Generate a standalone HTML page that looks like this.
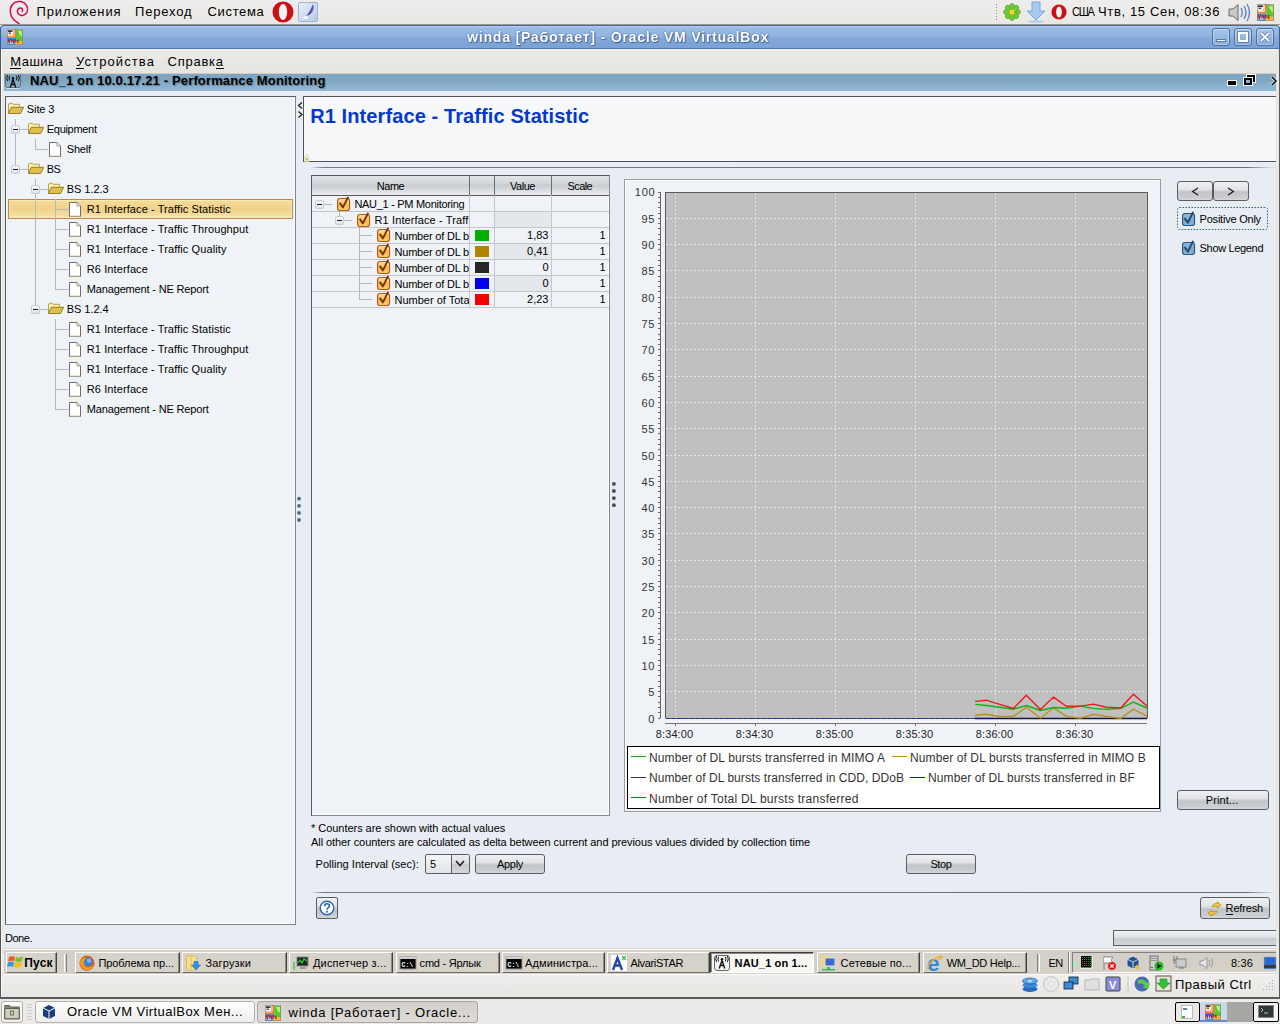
<!DOCTYPE html>
<html><head><meta charset="utf-8">
<style>
*{margin:0;padding:0;box-sizing:border-box}
html,body{width:1280px;height:1024px;overflow:hidden;background:#edebe9;font-family:"Liberation Sans",sans-serif;position:relative}
.a{position:absolute}
.t{position:absolute;white-space:nowrap;line-height:1}
svg{position:absolute;overflow:visible}
.btn{position:absolute;border:1px solid #5a5d62;border-radius:3px;background:linear-gradient(#eff0f2 0%,#e1e3e6 42%,#d2d5d8 48%,#c1c4c8 56%,#c9ccd0 85%,#d5d7da 100%)}
.wbtn{position:absolute;background:#d6d2ca;border-top:1px solid #fff;border-left:1px solid #fff;border-right:1px solid #404040;border-bottom:1px solid #6e6c68;box-shadow:inset -1px 0 0 #8c8a86}
.gbtn{position:absolute;border:1px solid #b3b0ab;border-radius:3px;background:linear-gradient(#fdfdfc,#efeeec)}
.hs{position:absolute;height:1px;background:#b4b9bf}
.vs{position:absolute;width:1px;background:#b4b9bf}
.exp{position:absolute;width:9px;height:9px;border:1px solid #c5ccd6;border-radius:2px;background:linear-gradient(#fafbfc,#dde2e8)}
.exp:after{content:"";position:absolute;left:1px;top:3px;width:5px;height:1px;background:#1a1a1a}
</style></head><body>
<div class="a" style="left:0;top:0;width:1280px;height:24px;background:linear-gradient(#efedeb,#eae8e5)"></div>
<svg style="left:0;top:0" width="32" height="25" viewBox="0 0 32 25"><path d="M19 23.5 C12.5 20.5 9.3 14.5 10.5 8.5 C11.8 3 16.5 0.8 21 1.6 C26 2.6 28.6 7.5 27.2 11.8 C26 15.2 21.5 16.6 18.8 14.3 C16.6 12.4 17 8.6 20 8.1 C22.2 7.8 23.2 9.8 22.2 11.3" fill="none" stroke="#d7094f" stroke-width="1.5" stroke-linecap="round"/></svg>
<span class="t" style="left:36.50px;top:5.00px;font-size:13px;letter-spacing:0.894px;">Приложения</span>
<span class="t" style="left:135.00px;top:5.00px;font-size:13px;letter-spacing:0.837px;">Переход</span>
<span class="t" style="left:207.50px;top:5.00px;font-size:13px;letter-spacing:0.663px;">Система</span>
<svg style="left:272px;top:1px" width="22" height="22" viewBox="0 0 22 22"><ellipse cx="11" cy="11" rx="10.5" ry="10.5" fill="#cc0f16"/><ellipse cx="11" cy="11" rx="4.2" ry="8" fill="#edebe9"/><ellipse cx="11" cy="11" rx="3.4" ry="7.2" fill="#f4f2f0"/></svg>
<div class="a" style="left:298px;top:2px;width:20px;height:20px;border:1px solid #9db3d6;border-radius:2px;background:linear-gradient(135deg,#e8eef8,#b9cbe8)"></div>
<svg style="left:300px;top:3px" width="16" height="18" viewBox="0 0 16 18"><path d="M13 1 C15 6 12 12 5 14 C9 10 11 6 13 1 Z" fill="#5a4bb0"/><path d="M2 15 L8 12 L7 16 Z" fill="#fff"/></svg>
<svg style="left:994px;top:3px" width="4" height="19" viewBox="0 0 4 19"><rect x="2" y="1" width="1" height="1" fill="#8a8884"/><rect x="2" y="4" width="1" height="1" fill="#8a8884"/><rect x="2" y="7" width="1" height="1" fill="#8a8884"/><rect x="2" y="10" width="1" height="1" fill="#8a8884"/><rect x="2" y="13" width="1" height="1" fill="#8a8884"/><rect x="2" y="16" width="1" height="1" fill="#8a8884"/></svg>
<svg style="left:1003px;top:3px" width="18" height="18" viewBox="0 0 18 18"><g><ellipse cx="13.60" cy="9.00" rx="2.6" ry="3.9" transform="rotate(90 13.60 9.00)" fill="#76cc3a" stroke="#4f9e22" stroke-width="0.7"/><ellipse cx="12.25" cy="12.25" rx="2.6" ry="3.9" transform="rotate(135 12.25 12.25)" fill="#76cc3a" stroke="#4f9e22" stroke-width="0.7"/><ellipse cx="9.00" cy="13.60" rx="2.6" ry="3.9" transform="rotate(180 9.00 13.60)" fill="#76cc3a" stroke="#4f9e22" stroke-width="0.7"/><ellipse cx="5.75" cy="12.25" rx="2.6" ry="3.9" transform="rotate(225 5.75 12.25)" fill="#76cc3a" stroke="#4f9e22" stroke-width="0.7"/><ellipse cx="4.40" cy="9.00" rx="2.6" ry="3.9" transform="rotate(270 4.40 9.00)" fill="#76cc3a" stroke="#4f9e22" stroke-width="0.7"/><ellipse cx="5.75" cy="5.75" rx="2.6" ry="3.9" transform="rotate(315 5.75 5.75)" fill="#76cc3a" stroke="#4f9e22" stroke-width="0.7"/><ellipse cx="9.00" cy="4.40" rx="2.6" ry="3.9" transform="rotate(360 9.00 4.40)" fill="#76cc3a" stroke="#4f9e22" stroke-width="0.7"/><ellipse cx="12.25" cy="5.75" rx="2.6" ry="3.9" transform="rotate(405 12.25 5.75)" fill="#76cc3a" stroke="#4f9e22" stroke-width="0.7"/></g><circle cx="9" cy="9" r="2.6" fill="#f2d52a"/></svg>
<svg style="left:1026px;top:1px" width="20" height="22" viewBox="0 0 20 22"><path d="M6 1 H14 V10 H19 L10 19 L1 10 H6 Z" fill="#a8c8ee" stroke="#7aa6dc" stroke-width="1"/><ellipse cx="10" cy="20.5" rx="8" ry="1.5" fill="#b8d0ee"/></svg>
<svg style="left:1051px;top:4px" width="16" height="16" viewBox="0 0 16 16"><circle cx="8" cy="8" r="7.6" fill="#cc0f16"/><ellipse cx="8" cy="8" rx="2.9" ry="5.6" fill="#f4f2f0"/></svg>
<span class="t" style="left:1072.00px;top:6.69px;font-size:11px;letter-spacing:-1.292px;transform:scaleY(1.08);">США</span>
<span class="t" style="left:1098.00px;top:5.00px;font-size:13px;letter-spacing:0.646px;">Чтв, 15 Сен, 08:36</span>
<svg style="left:1228px;top:3px" width="23" height="19" viewBox="0 0 23 19"><path d="M1 6 H5 L10 1.5 V17.5 L5 13 H1 Z" fill="#c8c8c8" stroke="#6a6a6a" stroke-width="1"/><path d="M13 5 Q15.5 9.5 13 14 M16 3 Q20 9.5 16 16 M19 1 Q24 9.5 19 18" fill="none" stroke="#5a82c8" stroke-width="1.3"/></svg>
<svg style="left:1257px;top:4px" width="17" height="17" viewBox="0 0 16 16"><rect x="0" y="0" width="16" height="16" fill="#e8e4dc"/><rect x="0" y="9" width="9" height="7" fill="#3a8ee8"/><rect x="1" y="11" width="5" height="4" fill="#9cd0fa"/><path d="M9 1 H16 V12 H9 Z" fill="#58c838"/><path d="M11 2 H15 V8 Q12 6 11 2 Z" fill="#b8f070"/><rect x="8" y="12" width="8" height="4" fill="#f4b83a"/><path d="M6.5 0 H9.5 L8.8 9 H0 V6.5 H6 Z" fill="#ee7a2a"/><path d="M7.2 1 L7 7 H1" stroke="#fff3e0" stroke-width="0.8" fill="none"/><rect x="0.5" y="0.5" width="5.5" height="5" fill="#fff"/><rect x="1" y="1.3" width="4.5" height="1.6" fill="#222"/><rect x="1.5" y="3.5" width="2.5" height="1.3" fill="#444"/><path d="M1 10 L2.2 13.5 L3.4 10 M4.6 10.5 V13.5 M6.3 10.5 Q5.2 11.2 6.3 12 Q7.2 12.7 6 13.5 M8.2 10 V13.5 M7.4 11 H9 M11.8 11 Q9.8 11 10.2 12.5 Q10.6 13.8 12 13" stroke="#a8182a" stroke-width="1.1" fill="none"/><rect x="0.3" y="0.3" width="15.4" height="15.4" fill="none" stroke="#8a8070" stroke-width="0.6"/></svg>
<div class="a" style="left:0;top:24px;width:1280px;height:1px;background:#9c9890"></div>
<div class="a" style="left:0;top:25px;width:1280px;height:24px;background:linear-gradient(#b6d0f3 0,#9abbe6 2px,#92b4e1 45%,#84a8d8 55%,#7ba2d6 100%);border-top:1px solid #4a6690;border-bottom:1px solid #4f76ad;border-left:1px solid #3e5a86;border-right:1px solid #3e5a86;border-radius:4px 4px 0 0"></div>
<svg style="left:7px;top:29px" width="16" height="16" viewBox="0 0 16 16"><rect x="0" y="0" width="16" height="16" fill="#e8e4dc"/><rect x="0" y="9" width="9" height="7" fill="#3a8ee8"/><rect x="1" y="11" width="5" height="4" fill="#9cd0fa"/><path d="M9 1 H16 V12 H9 Z" fill="#58c838"/><path d="M11 2 H15 V8 Q12 6 11 2 Z" fill="#b8f070"/><rect x="8" y="12" width="8" height="4" fill="#f4b83a"/><path d="M6.5 0 H9.5 L8.8 9 H0 V6.5 H6 Z" fill="#ee7a2a"/><path d="M7.2 1 L7 7 H1" stroke="#fff3e0" stroke-width="0.8" fill="none"/><rect x="0.5" y="0.5" width="5.5" height="5" fill="#fff"/><rect x="1" y="1.3" width="4.5" height="1.6" fill="#222"/><rect x="1.5" y="3.5" width="2.5" height="1.3" fill="#444"/><path d="M1 10 L2.2 13.5 L3.4 10 M4.6 10.5 V13.5 M6.3 10.5 Q5.2 11.2 6.3 12 Q7.2 12.7 6 13.5 M8.2 10 V13.5 M7.4 11 H9 M11.8 11 Q9.8 11 10.2 12.5 Q10.6 13.8 12 13" stroke="#a8182a" stroke-width="1.1" fill="none"/><rect x="0.3" y="0.3" width="15.4" height="15.4" fill="none" stroke="#8a8070" stroke-width="0.6"/></svg>
<span class="t" style="left:467.00px;top:30.45px;font-size:14px;font-weight:700;color:#fff;letter-spacing:0.812px;text-shadow:0 0 1px #2f5590,0 0 1px #2f5590,1px 1px 1px #41679d;">winda [Работает] - Oracle VM VirtualBox</span>
<div class="a" style="left:1212px;top:28px;width:18px;height:18px;border:1px solid #4d6e9e;border-radius:3px;background:linear-gradient(#a9c5ea,#86abdc);box-shadow:inset 0 0 0 1px rgba(255,255,255,.35)"></div>
<div class="a" style="left:1234px;top:28px;width:18px;height:18px;border:1px solid #4d6e9e;border-radius:3px;background:linear-gradient(#a9c5ea,#86abdc);box-shadow:inset 0 0 0 1px rgba(255,255,255,.35)"></div>
<div class="a" style="left:1256px;top:28px;width:18px;height:18px;border:1px solid #4d6e9e;border-radius:3px;background:linear-gradient(#a9c5ea,#86abdc);box-shadow:inset 0 0 0 1px rgba(255,255,255,.35)"></div>
<div class="a" style="left:1216px;top:39px;width:10px;height:3px;background:#fff;border:1px solid #5a7aa8;box-sizing:content-box;width:8px;height:1px"></div>
<div class="a" style="left:1238px;top:32px;width:10px;height:10px;border:2px solid #fff;outline:1px solid rgba(70,100,150,.6)"></div>
<svg style="left:1260px;top:32px" width="10" height="10" viewBox="0 0 10 10"><path d="M1 1 L9 9 M9 1 L1 9" stroke="#5a7aa8" stroke-width="3.2"/><path d="M1 1 L9 9 M9 1 L1 9" stroke="#fff" stroke-width="1.8"/></svg>
<div class="a" style="left:0;top:49px;width:1280px;height:24px;background:linear-gradient(#f4f3f1 0,#ebe9e6 2px,#e7e5e2 100%)"></div>
<span class="t" style="left:10.30px;top:55.00px;font-size:13px;letter-spacing:0.448px;">Машина</span>
<div class="a" style="left:10px;top:68px;width:11px;height:1px;background:#000"></div>
<span class="t" style="left:76.00px;top:55.00px;font-size:13px;letter-spacing:1.098px;">Устройства</span>
<div class="a" style="left:76px;top:68px;width:8px;height:1px;background:#000"></div>
<span class="t" style="left:167.50px;top:55.00px;font-size:13px;letter-spacing:0.757px;">Справка</span>
<div class="a" style="left:216px;top:68px;width:8px;height:1px;background:#000"></div>
<div class="a" style="left:0;top:49px;width:4px;height:950px;background:linear-gradient(90deg,#555 0 1px,#fafafa 1px 2px,#e9e7e4 2px)"></div>
<div class="a" style="left:1276px;top:49px;width:4px;height:950px;background:linear-gradient(90deg,#e9e7e4 0 3px,#5a5a5a 3px)"></div>
<div class="a" style="left:0;top:997px;width:1280px;height:2px;background:#5a5a5a"></div>
<div class="a" style="left:4px;top:73px;width:1272px;height:876px;background:#e8ecf3"></div>
<div class="a" style="left:4px;top:73px;width:1272px;height:1px;background:#d2ccc4"></div><div class="a" style="left:4px;top:74px;width:1272px;height:17px;background:linear-gradient(#7fa5c2 0%,#7fa6c1 35%,#8cb2cf 75%,#93b9d5 100%)"></div>
<div class="a" style="left:5px;top:74px;width:16px;height:14px;border:1px solid #6f6f6f;border-top:none;border-radius:0 0 3px 3px;box-shadow:0 1px 0 #d8dde2"></div>
<svg style="left:5px;top:73.5px" width="16" height="16" viewBox="0 0 16 16"><path d="M8 5.5 L5.2 13.5 M8 5.5 L10.8 13.5 M6.3 10.5 H9.7" stroke="#111" stroke-width="1.4" fill="none"/><circle cx="8" cy="4.2" r="1.3" fill="#111"/><path d="M4.6 1.8 Q3.4 4 4.6 6.4 M11.4 1.8 Q12.6 4 11.4 6.4 M2.6 1 Q0.9 4 2.6 7.2 M13.4 1 Q15.1 4 13.4 7.2" stroke="#111" stroke-width="1" fill="none"/></svg>
<span class="t" style="left:30.00px;top:74.00px;font-size:13px;font-weight:700;letter-spacing:0.148px;text-shadow:1px 1px 1px rgba(60,80,100,.55);">NAU_1 on 10.0.17.21 - Performance Monitoring</span>
<div class="a" style="left:1228px;top:81px;width:8px;height:4px;background:#000;box-shadow:0 0 0 1px #fff"></div>
<div class="a" style="left:1247px;top:75px;width:8px;height:7px;border:2px solid #000;box-shadow:0 0 0 1px #fff"></div><div class="a" style="left:1244px;top:78px;width:8px;height:7px;border:2px solid #000;background:#8fb4d1;box-shadow:0 0 0 1px #fff"></div>
<svg style="left:1271px;top:76px" width="6" height="10" viewBox="0 0 6 10"><path d="M1 1 L5 5 L1 9" stroke="#fff" stroke-width="3" fill="none"/><path d="M1 1 L5 5 L1 9" stroke="#000" stroke-width="1.6" fill="none"/></svg>
<div class="a" style="left:5px;top:96px;width:291px;height:829px;background:#eff3f8;border:1px solid #575c60;border-right-color:#80868b;border-bottom-color:#7c8287;box-shadow:inset -1px -1px 0 #fbfdff"></div>
<div class="a" style="left:8px;top:199px;width:285px;height:20px;border:1px solid #c3834c;background:linear-gradient(#f5dc98,#f0d189 50%,#f6e4ad);box-shadow:inset 0 0 0 1px rgba(255,248,210,.45)"></div>
<div class="vs" style="left:15px;top:119px;height:50px"></div>
<div class="vs" style="left:35px;top:139px;height:10px"></div>
<div class="hs" style="left:35px;top:149px;width:13px"></div>
<div class="vs" style="left:35px;top:179px;height:130px"></div>
<div class="vs" style="left:55px;top:199px;height:90px"></div>
<div class="vs" style="left:55px;top:319px;height:90px"></div>
<svg style="left:8px;top:103px" width="16" height="11" viewBox="0 0 16 11"><path d="M0.5 10.5 V1 L1.2 0.4 H4.5 L5.3 1.3 H11.5 V3.8" fill="#fcedb0" stroke="#b09838" stroke-width="0.9"/><path d="M0.5 10.5 L3.3 4.3 H15.6 L12.6 10.5 Z" fill="#e2bf4e" stroke="#8c7424" stroke-width="0.9"/></svg>
<span class="t" style="left:26.80px;top:103.69px;font-size:11px;letter-spacing:-0.100px;">Site 3</span>
<div class="hs" style="left:15px;top:129px;width:13px"></div>
<div class="exp" style="left:11px;top:125px"></div>
<svg style="left:28px;top:123px" width="16" height="11" viewBox="0 0 16 11"><path d="M0.5 10.5 V1 L1.2 0.4 H4.5 L5.3 1.3 H11.5 V3.8" fill="#fcedb0" stroke="#b09838" stroke-width="0.9"/><path d="M0.5 10.5 L3.3 4.3 H15.6 L12.6 10.5 Z" fill="#e2bf4e" stroke="#8c7424" stroke-width="0.9"/></svg>
<span class="t" style="left:46.80px;top:123.69px;font-size:11px;letter-spacing:-0.300px;">Equipment</span>
<svg style="left:49px;top:142px" width="12" height="15" viewBox="0 0 12 15"><path d="M0.5 0.5 H8 L11.5 4 V14.5 H0.5 Z" fill="#fff" stroke="#6f6f6f" stroke-width="1"/><path d="M8 0.5 V4 H11.5" fill="#f4eecf" stroke="#8a8a8a" stroke-width="0.8"/><path d="M1 14 H11" stroke="#d8d0a8" stroke-width="1"/></svg>
<span class="t" style="left:66.80px;top:143.69px;font-size:11px;letter-spacing:-0.220px;">Shelf</span>
<div class="hs" style="left:15px;top:169px;width:13px"></div>
<div class="exp" style="left:11px;top:165px"></div>
<svg style="left:28px;top:163px" width="16" height="11" viewBox="0 0 16 11"><path d="M0.5 10.5 V1 L1.2 0.4 H4.5 L5.3 1.3 H11.5 V3.8" fill="#fcedb0" stroke="#b09838" stroke-width="0.9"/><path d="M0.5 10.5 L3.3 4.3 H15.6 L12.6 10.5 Z" fill="#e2bf4e" stroke="#8c7424" stroke-width="0.9"/></svg>
<span class="t" style="left:46.80px;top:163.69px;font-size:11px;letter-spacing:-0.750px;">BS</span>
<div class="hs" style="left:35px;top:189px;width:13px"></div>
<div class="exp" style="left:31px;top:185px"></div>
<svg style="left:48px;top:183px" width="16" height="11" viewBox="0 0 16 11"><path d="M0.5 10.5 V1 L1.2 0.4 H4.5 L5.3 1.3 H11.5 V3.8" fill="#fcedb0" stroke="#b09838" stroke-width="0.9"/><path d="M0.5 10.5 L3.3 4.3 H15.6 L12.6 10.5 Z" fill="#e2bf4e" stroke="#8c7424" stroke-width="0.9"/></svg>
<span class="t" style="left:66.80px;top:183.69px;font-size:11px;letter-spacing:-0.062px;">BS 1.2.3</span>
<div class="hs" style="left:55px;top:209px;width:13px"></div>
<svg style="left:69px;top:202px" width="12" height="15" viewBox="0 0 12 15"><path d="M0.5 0.5 H8 L11.5 4 V14.5 H0.5 Z" fill="#fff" stroke="#6f6f6f" stroke-width="1"/><path d="M8 0.5 V4 H11.5" fill="#f4eecf" stroke="#8a8a8a" stroke-width="0.8"/><path d="M1 14 H11" stroke="#d8d0a8" stroke-width="1"/></svg>
<span class="t" style="left:86.80px;top:203.69px;font-size:11px;letter-spacing:0.094px;">R1 Interface - Traffic Statistic</span>
<div class="hs" style="left:55px;top:229px;width:13px"></div>
<svg style="left:69px;top:222px" width="12" height="15" viewBox="0 0 12 15"><path d="M0.5 0.5 H8 L11.5 4 V14.5 H0.5 Z" fill="#fff" stroke="#6f6f6f" stroke-width="1"/><path d="M8 0.5 V4 H11.5" fill="#f4eecf" stroke="#8a8a8a" stroke-width="0.8"/><path d="M1 14 H11" stroke="#d8d0a8" stroke-width="1"/></svg>
<span class="t" style="left:86.80px;top:223.69px;font-size:11px;letter-spacing:0.091px;">R1 Interface - Traffic Throughput</span>
<div class="hs" style="left:55px;top:249px;width:13px"></div>
<svg style="left:69px;top:242px" width="12" height="15" viewBox="0 0 12 15"><path d="M0.5 0.5 H8 L11.5 4 V14.5 H0.5 Z" fill="#fff" stroke="#6f6f6f" stroke-width="1"/><path d="M8 0.5 V4 H11.5" fill="#f4eecf" stroke="#8a8a8a" stroke-width="0.8"/><path d="M1 14 H11" stroke="#d8d0a8" stroke-width="1"/></svg>
<span class="t" style="left:86.80px;top:243.69px;font-size:11px;letter-spacing:0.100px;">R1 Interface - Traffic Quality</span>
<div class="hs" style="left:55px;top:269px;width:13px"></div>
<svg style="left:69px;top:262px" width="12" height="15" viewBox="0 0 12 15"><path d="M0.5 0.5 H8 L11.5 4 V14.5 H0.5 Z" fill="#fff" stroke="#6f6f6f" stroke-width="1"/><path d="M8 0.5 V4 H11.5" fill="#f4eecf" stroke="#8a8a8a" stroke-width="0.8"/><path d="M1 14 H11" stroke="#d8d0a8" stroke-width="1"/></svg>
<span class="t" style="left:86.80px;top:263.69px;font-size:11px;letter-spacing:0.100px;">R6 Interface</span>
<div class="hs" style="left:55px;top:289px;width:13px"></div>
<svg style="left:69px;top:282px" width="12" height="15" viewBox="0 0 12 15"><path d="M0.5 0.5 H8 L11.5 4 V14.5 H0.5 Z" fill="#fff" stroke="#6f6f6f" stroke-width="1"/><path d="M8 0.5 V4 H11.5" fill="#f4eecf" stroke="#8a8a8a" stroke-width="0.8"/><path d="M1 14 H11" stroke="#d8d0a8" stroke-width="1"/></svg>
<span class="t" style="left:86.80px;top:283.69px;font-size:11px;letter-spacing:-0.159px;">Management - NE Report</span>
<div class="hs" style="left:35px;top:309px;width:13px"></div>
<div class="exp" style="left:31px;top:305px"></div>
<svg style="left:48px;top:303px" width="16" height="11" viewBox="0 0 16 11"><path d="M0.5 10.5 V1 L1.2 0.4 H4.5 L5.3 1.3 H11.5 V3.8" fill="#fcedb0" stroke="#b09838" stroke-width="0.9"/><path d="M0.5 10.5 L3.3 4.3 H15.6 L12.6 10.5 Z" fill="#e2bf4e" stroke="#8c7424" stroke-width="0.9"/></svg>
<span class="t" style="left:66.80px;top:303.69px;font-size:11px;letter-spacing:-0.062px;">BS 1.2.4</span>
<div class="hs" style="left:55px;top:329px;width:13px"></div>
<svg style="left:69px;top:322px" width="12" height="15" viewBox="0 0 12 15"><path d="M0.5 0.5 H8 L11.5 4 V14.5 H0.5 Z" fill="#fff" stroke="#6f6f6f" stroke-width="1"/><path d="M8 0.5 V4 H11.5" fill="#f4eecf" stroke="#8a8a8a" stroke-width="0.8"/><path d="M1 14 H11" stroke="#d8d0a8" stroke-width="1"/></svg>
<span class="t" style="left:86.80px;top:323.69px;font-size:11px;letter-spacing:0.094px;">R1 Interface - Traffic Statistic</span>
<div class="hs" style="left:55px;top:349px;width:13px"></div>
<svg style="left:69px;top:342px" width="12" height="15" viewBox="0 0 12 15"><path d="M0.5 0.5 H8 L11.5 4 V14.5 H0.5 Z" fill="#fff" stroke="#6f6f6f" stroke-width="1"/><path d="M8 0.5 V4 H11.5" fill="#f4eecf" stroke="#8a8a8a" stroke-width="0.8"/><path d="M1 14 H11" stroke="#d8d0a8" stroke-width="1"/></svg>
<span class="t" style="left:86.80px;top:343.69px;font-size:11px;letter-spacing:0.091px;">R1 Interface - Traffic Throughput</span>
<div class="hs" style="left:55px;top:369px;width:13px"></div>
<svg style="left:69px;top:362px" width="12" height="15" viewBox="0 0 12 15"><path d="M0.5 0.5 H8 L11.5 4 V14.5 H0.5 Z" fill="#fff" stroke="#6f6f6f" stroke-width="1"/><path d="M8 0.5 V4 H11.5" fill="#f4eecf" stroke="#8a8a8a" stroke-width="0.8"/><path d="M1 14 H11" stroke="#d8d0a8" stroke-width="1"/></svg>
<span class="t" style="left:86.80px;top:363.69px;font-size:11px;letter-spacing:0.100px;">R1 Interface - Traffic Quality</span>
<div class="hs" style="left:55px;top:389px;width:13px"></div>
<svg style="left:69px;top:382px" width="12" height="15" viewBox="0 0 12 15"><path d="M0.5 0.5 H8 L11.5 4 V14.5 H0.5 Z" fill="#fff" stroke="#6f6f6f" stroke-width="1"/><path d="M8 0.5 V4 H11.5" fill="#f4eecf" stroke="#8a8a8a" stroke-width="0.8"/><path d="M1 14 H11" stroke="#d8d0a8" stroke-width="1"/></svg>
<span class="t" style="left:86.80px;top:383.69px;font-size:11px;letter-spacing:0.100px;">R6 Interface</span>
<div class="hs" style="left:55px;top:409px;width:13px"></div>
<svg style="left:69px;top:402px" width="12" height="15" viewBox="0 0 12 15"><path d="M0.5 0.5 H8 L11.5 4 V14.5 H0.5 Z" fill="#fff" stroke="#6f6f6f" stroke-width="1"/><path d="M8 0.5 V4 H11.5" fill="#f4eecf" stroke="#8a8a8a" stroke-width="0.8"/><path d="M1 14 H11" stroke="#d8d0a8" stroke-width="1"/></svg>
<span class="t" style="left:86.80px;top:403.69px;font-size:11px;letter-spacing:-0.159px;">Management - NE Report</span>
<svg style="left:297px;top:101px" width="6" height="18" viewBox="0 0 6 18"><path d="M5 1.5 L1.5 4.5 L5 7.5 M1.5 10.5 L5 13.5 L1.5 16.5" stroke="#222" stroke-width="1.3" fill="none"/></svg>
<svg style="left:296px;top:496px" width="6" height="27" viewBox="0 0 6 27"><circle cx="3" cy="2.7" r="1.9" fill="#4f6a85"/><circle cx="3" cy="9.8" r="1.9" fill="#4f6a85"/><circle cx="3" cy="16.9" r="1.9" fill="#4f6a85"/><circle cx="3" cy="23.999999999999996" r="1.9" fill="#4f6a85"/></svg>
<div class="a" style="left:303px;top:96px;width:973px;height:66px;background:#f7f8fa;border-top:1px solid #505458;border-bottom:1px solid #505458;border-left:1px solid #505458"></div>
<span class="t" style="left:310.20px;top:105.57px;font-size:20px;font-weight:700;color:#0539cc;letter-spacing:0.104px;">R1 Interface - Traffic Statistic</span>
<svg style="left:304px;top:154px" width="6" height="8" viewBox="0 0 6 8"><path d="M1.5 3 V2 A1.5 1.3 0 0 1 4.5 2 V3" stroke="#d8d8d0" fill="none" stroke-width="0.9"/><rect x="0.5" y="3" width="4.5" height="4.5" fill="#f2eeb0" stroke="#e0dca0" stroke-width="0.5"/><rect x="2" y="4.5" width="1.6" height="1.6" fill="#9a9aa8"/></svg>
<div class="a" style="left:311px;top:167px;width:965px;height:1px;background:linear-gradient(90deg,#e8ecf3 0,#767a7e 12px,#6a6e72 935px,#e8ecf3 100%)"></div>
<div class="a" style="left:311px;top:175px;width:299px;height:641px;background:#eff3f8;border:1px solid #55595d;border-right-color:#868a8e;border-bottom-color:#84888c;box-shadow:inset -1px -1px 0 #fbfdff"></div>
<div class="a" style="left:312px;top:176px;width:297px;height:20px;background:linear-gradient(#e1e4e8 0%,#d6d9dd 30%,#c9ccd1 50%,#d9dce0 75%,#eceef0 100%);border-bottom:1px solid #56595d"></div>
<div class="a" style="left:469px;top:176px;width:1px;height:20px;background:#6a6d71"></div>
<div class="a" style="left:469px;top:195px;width:1px;height:112px;background:#c3c7cc"></div>
<div class="a" style="left:494px;top:176px;width:1px;height:20px;background:#6a6d71"></div>
<div class="a" style="left:494px;top:195px;width:1px;height:112px;background:#c3c7cc"></div>
<div class="a" style="left:551px;top:176px;width:1px;height:20px;background:#6a6d71"></div>
<div class="a" style="left:551px;top:195px;width:1px;height:112px;background:#c3c7cc"></div>
<span class="t" style="left:376.75px;top:180.69px;font-size:11px;letter-spacing:-0.461px;">Name</span>
<span class="t" style="left:510.00px;top:180.69px;font-size:11px;letter-spacing:-0.466px;">Value</span>
<span class="t" style="left:567.55px;top:180.69px;font-size:11px;letter-spacing:-0.606px;">Scale</span>
<div class="a" style="left:312px;top:211px;width:297px;height:1px;background:#c3c7cc"></div>
<div class="a" style="left:312px;top:227px;width:297px;height:1px;background:#c3c7cc"></div>
<div class="a" style="left:312px;top:243px;width:297px;height:1px;background:#c3c7cc"></div>
<div class="a" style="left:312px;top:259px;width:297px;height:1px;background:#c3c7cc"></div>
<div class="a" style="left:312px;top:275px;width:297px;height:1px;background:#c3c7cc"></div>
<div class="a" style="left:312px;top:291px;width:297px;height:1px;background:#c3c7cc"></div>
<div class="a" style="left:312px;top:307px;width:297px;height:1px;background:#c3c7cc"></div>
<div class="a" style="left:495px;top:212px;width:56px;height:15px;background:#e4e7eb"></div>
<div class="a" style="left:495px;top:244px;width:56px;height:15px;background:#e4e7eb"></div>
<div class="a" style="left:495px;top:276px;width:56px;height:15px;background:#e4e7eb"></div>
<div class="exp" style="left:315px;top:200px"></div>
<div class="hs" style="left:324px;top:204px;width:8px"></div>
<svg style="left:337px;top:196px" width="15" height="16" viewBox="0 0 15 16"><defs><linearGradient id="cg" x1="0" y1="0" x2="0" y2="1"><stop offset="0" stop-color="#fde69e"/><stop offset="0.55" stop-color="#f2bb52"/><stop offset="1" stop-color="#f6d274"/></linearGradient></defs><rect x="0.55" y="2.55" width="12" height="12" rx="2.6" fill="url(#cg)" stroke="#b3560f" stroke-width="1.1"/><path d="M2.6 6.8 L5.9 11.4 L11.2 0.8" stroke="#7a2e0e" stroke-width="1.9" fill="none" stroke-linejoin="round"/></svg>
<span class="t" style="left:354.40px;top:198.89px;font-size:11px;letter-spacing:-0.293px;">NAU_1 - PM Monitoring</span>
<div class="vs" style="left:339px;top:211px;height:5px"></div>
<div class="exp" style="left:335px;top:216px"></div>
<div class="hs" style="left:344px;top:220px;width:8px"></div>
<svg style="left:357px;top:212px" width="15" height="16" viewBox="0 0 15 16"><defs><linearGradient id="cg" x1="0" y1="0" x2="0" y2="1"><stop offset="0" stop-color="#fde69e"/><stop offset="0.55" stop-color="#f2bb52"/><stop offset="1" stop-color="#f6d274"/></linearGradient></defs><rect x="0.55" y="2.55" width="12" height="12" rx="2.6" fill="url(#cg)" stroke="#b3560f" stroke-width="1.1"/><path d="M2.6 6.8 L5.9 11.4 L11.2 0.8" stroke="#7a2e0e" stroke-width="1.9" fill="none" stroke-linejoin="round"/></svg>
<div class="a" style="left:312px;top:196px;width:157px;height:111px;overflow:hidden">
<span class="t" style="left:62.50px;top:18.89px;font-size:11px;letter-spacing:0.12px;">R1 Interface - Traffic Statistic</span>
<span class="t" style="left:82.50px;top:34.89px;font-size:11px;letter-spacing:-0.2px;">Number of DL bursts transferred</span>
<span class="t" style="left:82.50px;top:50.89px;font-size:11px;letter-spacing:-0.2px;">Number of DL bursts transferred</span>
<span class="t" style="left:82.50px;top:66.89px;font-size:11px;letter-spacing:-0.2px;">Number of DL bursts transferred</span>
<span class="t" style="left:82.50px;top:82.89px;font-size:11px;letter-spacing:-0.2px;">Number of DL bursts transferred</span>
<span class="t" style="left:82.50px;top:98.89px;font-size:11px;letter-spacing:0px;">Number of Total DL bursts transferred</span>
</div>
<div class="vs" style="left:359px;top:227px;height:73px"></div>
<div class="hs" style="left:360px;top:235px;width:12px"></div>
<svg style="left:377px;top:227px" width="15" height="16" viewBox="0 0 15 16"><defs><linearGradient id="cg" x1="0" y1="0" x2="0" y2="1"><stop offset="0" stop-color="#fde69e"/><stop offset="0.55" stop-color="#f2bb52"/><stop offset="1" stop-color="#f6d274"/></linearGradient></defs><rect x="0.55" y="2.55" width="12" height="12" rx="2.6" fill="url(#cg)" stroke="#b3560f" stroke-width="1.1"/><path d="M2.6 6.8 L5.9 11.4 L11.2 0.8" stroke="#7a2e0e" stroke-width="1.9" fill="none" stroke-linejoin="round"/></svg>
<div class="hs" style="left:360px;top:251px;width:12px"></div>
<svg style="left:377px;top:243px" width="15" height="16" viewBox="0 0 15 16"><defs><linearGradient id="cg" x1="0" y1="0" x2="0" y2="1"><stop offset="0" stop-color="#fde69e"/><stop offset="0.55" stop-color="#f2bb52"/><stop offset="1" stop-color="#f6d274"/></linearGradient></defs><rect x="0.55" y="2.55" width="12" height="12" rx="2.6" fill="url(#cg)" stroke="#b3560f" stroke-width="1.1"/><path d="M2.6 6.8 L5.9 11.4 L11.2 0.8" stroke="#7a2e0e" stroke-width="1.9" fill="none" stroke-linejoin="round"/></svg>
<div class="hs" style="left:360px;top:267px;width:12px"></div>
<svg style="left:377px;top:259px" width="15" height="16" viewBox="0 0 15 16"><defs><linearGradient id="cg" x1="0" y1="0" x2="0" y2="1"><stop offset="0" stop-color="#fde69e"/><stop offset="0.55" stop-color="#f2bb52"/><stop offset="1" stop-color="#f6d274"/></linearGradient></defs><rect x="0.55" y="2.55" width="12" height="12" rx="2.6" fill="url(#cg)" stroke="#b3560f" stroke-width="1.1"/><path d="M2.6 6.8 L5.9 11.4 L11.2 0.8" stroke="#7a2e0e" stroke-width="1.9" fill="none" stroke-linejoin="round"/></svg>
<div class="hs" style="left:360px;top:283px;width:12px"></div>
<svg style="left:377px;top:275px" width="15" height="16" viewBox="0 0 15 16"><defs><linearGradient id="cg" x1="0" y1="0" x2="0" y2="1"><stop offset="0" stop-color="#fde69e"/><stop offset="0.55" stop-color="#f2bb52"/><stop offset="1" stop-color="#f6d274"/></linearGradient></defs><rect x="0.55" y="2.55" width="12" height="12" rx="2.6" fill="url(#cg)" stroke="#b3560f" stroke-width="1.1"/><path d="M2.6 6.8 L5.9 11.4 L11.2 0.8" stroke="#7a2e0e" stroke-width="1.9" fill="none" stroke-linejoin="round"/></svg>
<div class="hs" style="left:360px;top:299px;width:12px"></div>
<svg style="left:377px;top:291px" width="15" height="16" viewBox="0 0 15 16"><defs><linearGradient id="cg" x1="0" y1="0" x2="0" y2="1"><stop offset="0" stop-color="#fde69e"/><stop offset="0.55" stop-color="#f2bb52"/><stop offset="1" stop-color="#f6d274"/></linearGradient></defs><rect x="0.55" y="2.55" width="12" height="12" rx="2.6" fill="url(#cg)" stroke="#b3560f" stroke-width="1.1"/><path d="M2.6 6.8 L5.9 11.4 L11.2 0.8" stroke="#7a2e0e" stroke-width="1.9" fill="none" stroke-linejoin="round"/></svg>
<div class="a" style="left:475px;top:230px;width:14px;height:11px;background:#00b000"></div>
<span class="t" style="left:527.08px;top:230.19px;font-size:11px;">1,83</span>
<span class="t" style="left:599.38px;top:230.19px;font-size:11px;">1</span>
<div class="a" style="left:475px;top:246px;width:14px;height:11px;background:#b08600"></div>
<span class="t" style="left:527.08px;top:246.19px;font-size:11px;">0,41</span>
<span class="t" style="left:599.38px;top:246.19px;font-size:11px;">1</span>
<div class="a" style="left:475px;top:262px;width:14px;height:11px;background:#262626"></div>
<span class="t" style="left:542.38px;top:262.19px;font-size:11px;">0</span>
<span class="t" style="left:599.38px;top:262.19px;font-size:11px;">1</span>
<div class="a" style="left:475px;top:278px;width:14px;height:11px;background:#0000f0"></div>
<span class="t" style="left:542.38px;top:278.19px;font-size:11px;">0</span>
<span class="t" style="left:599.38px;top:278.19px;font-size:11px;">1</span>
<div class="a" style="left:475px;top:294px;width:14px;height:11px;background:#f00000"></div>
<span class="t" style="left:527.08px;top:294.19px;font-size:11px;">2,23</span>
<span class="t" style="left:599.38px;top:294.19px;font-size:11px;">1</span>
<svg style="left:611px;top:481px" width="6" height="27" viewBox="0 0 6 27"><circle cx="2.9" cy="2.9" r="1.9" fill="#464b52"/><circle cx="2.9" cy="10.0" r="1.9" fill="#464b52"/><circle cx="2.9" cy="17.099999999999998" r="1.9" fill="#464b52"/><circle cx="2.9" cy="24.199999999999996" r="1.9" fill="#464b52"/></svg>
<div class="a" style="left:624px;top:179px;width:537px;height:633px;background:#eff3f8;border:1px solid #9a9c9f;box-shadow:inset 1px 1px 0 #fff"></div>
<svg style="left:0;top:0" width="1280" height="1024" viewBox="0 0 1280 1024"><rect x="665" y="192" width="482.5" height="526" fill="#c0c0c0"/><line x1="666" y1="691.50" x2="1147" y2="691.50" stroke="#e6e6e6" stroke-width="1" stroke-dasharray="2,2"/><line x1="666" y1="665.50" x2="1147" y2="665.50" stroke="#e6e6e6" stroke-width="1" stroke-dasharray="2,2"/><line x1="666" y1="639.50" x2="1147" y2="639.50" stroke="#e6e6e6" stroke-width="1" stroke-dasharray="2,2"/><line x1="666" y1="612.50" x2="1147" y2="612.50" stroke="#e6e6e6" stroke-width="1" stroke-dasharray="2,2"/><line x1="666" y1="586.50" x2="1147" y2="586.50" stroke="#e6e6e6" stroke-width="1" stroke-dasharray="2,2"/><line x1="666" y1="560.50" x2="1147" y2="560.50" stroke="#e6e6e6" stroke-width="1" stroke-dasharray="2,2"/><line x1="666" y1="533.50" x2="1147" y2="533.50" stroke="#e6e6e6" stroke-width="1" stroke-dasharray="2,2"/><line x1="666" y1="507.50" x2="1147" y2="507.50" stroke="#e6e6e6" stroke-width="1" stroke-dasharray="2,2"/><line x1="666" y1="481.50" x2="1147" y2="481.50" stroke="#e6e6e6" stroke-width="1" stroke-dasharray="2,2"/><line x1="666" y1="455.50" x2="1147" y2="455.50" stroke="#e6e6e6" stroke-width="1" stroke-dasharray="2,2"/><line x1="666" y1="428.50" x2="1147" y2="428.50" stroke="#e6e6e6" stroke-width="1" stroke-dasharray="2,2"/><line x1="666" y1="402.50" x2="1147" y2="402.50" stroke="#e6e6e6" stroke-width="1" stroke-dasharray="2,2"/><line x1="666" y1="376.50" x2="1147" y2="376.50" stroke="#e6e6e6" stroke-width="1" stroke-dasharray="2,2"/><line x1="666" y1="349.50" x2="1147" y2="349.50" stroke="#e6e6e6" stroke-width="1" stroke-dasharray="2,2"/><line x1="666" y1="323.50" x2="1147" y2="323.50" stroke="#e6e6e6" stroke-width="1" stroke-dasharray="2,2"/><line x1="666" y1="297.50" x2="1147" y2="297.50" stroke="#e6e6e6" stroke-width="1" stroke-dasharray="2,2"/><line x1="666" y1="270.50" x2="1147" y2="270.50" stroke="#e6e6e6" stroke-width="1" stroke-dasharray="2,2"/><line x1="666" y1="244.50" x2="1147" y2="244.50" stroke="#e6e6e6" stroke-width="1" stroke-dasharray="2,2"/><line x1="666" y1="218.50" x2="1147" y2="218.50" stroke="#e6e6e6" stroke-width="1" stroke-dasharray="2,2"/><line x1="675.5" y1="193" x2="675.5" y2="718" stroke="#e6e6e6" stroke-width="1" stroke-dasharray="2,2"/><line x1="755.5" y1="193" x2="755.5" y2="718" stroke="#e6e6e6" stroke-width="1" stroke-dasharray="2,2"/><line x1="835.5" y1="193" x2="835.5" y2="718" stroke="#e6e6e6" stroke-width="1" stroke-dasharray="2,2"/><line x1="915.5" y1="193" x2="915.5" y2="718" stroke="#e6e6e6" stroke-width="1" stroke-dasharray="2,2"/><line x1="995.5" y1="193" x2="995.5" y2="718" stroke="#e6e6e6" stroke-width="1" stroke-dasharray="2,2"/><line x1="1075.5" y1="193" x2="1075.5" y2="718" stroke="#e6e6e6" stroke-width="1" stroke-dasharray="2,2"/><line x1="665.5" y1="192" x2="665.5" y2="718.5" stroke="#5a5a5a" stroke-width="1"/><line x1="665" y1="192.5" x2="1147.5" y2="192.5" stroke="#5a5a5a" stroke-width="1"/><line x1="1147.5" y1="192" x2="1147.5" y2="718.5" stroke="#5a5a5a" stroke-width="1"/><line x1="660.5" y1="192" x2="660.5" y2="718.5" stroke="#666" stroke-width="1"/><line x1="658" y1="718.5" x2="660" y2="718.5" stroke="#666" stroke-width="1"/><line x1="658" y1="712.5" x2="660" y2="712.5" stroke="#666" stroke-width="1"/><line x1="658" y1="707.5" x2="660" y2="707.5" stroke="#666" stroke-width="1"/><line x1="658" y1="702.5" x2="660" y2="702.5" stroke="#666" stroke-width="1"/><line x1="658" y1="696.5" x2="660" y2="696.5" stroke="#666" stroke-width="1"/><line x1="658" y1="691.5" x2="660" y2="691.5" stroke="#666" stroke-width="1"/><line x1="658" y1="686.5" x2="660" y2="686.5" stroke="#666" stroke-width="1"/><line x1="658" y1="681.5" x2="660" y2="681.5" stroke="#666" stroke-width="1"/><line x1="658" y1="675.5" x2="660" y2="675.5" stroke="#666" stroke-width="1"/><line x1="658" y1="670.5" x2="660" y2="670.5" stroke="#666" stroke-width="1"/><line x1="658" y1="665.5" x2="660" y2="665.5" stroke="#666" stroke-width="1"/><line x1="658" y1="660.5" x2="660" y2="660.5" stroke="#666" stroke-width="1"/><line x1="658" y1="654.5" x2="660" y2="654.5" stroke="#666" stroke-width="1"/><line x1="658" y1="649.5" x2="660" y2="649.5" stroke="#666" stroke-width="1"/><line x1="658" y1="644.5" x2="660" y2="644.5" stroke="#666" stroke-width="1"/><line x1="658" y1="639.5" x2="660" y2="639.5" stroke="#666" stroke-width="1"/><line x1="658" y1="633.5" x2="660" y2="633.5" stroke="#666" stroke-width="1"/><line x1="658" y1="628.5" x2="660" y2="628.5" stroke="#666" stroke-width="1"/><line x1="658" y1="623.5" x2="660" y2="623.5" stroke="#666" stroke-width="1"/><line x1="658" y1="618.5" x2="660" y2="618.5" stroke="#666" stroke-width="1"/><line x1="658" y1="612.5" x2="660" y2="612.5" stroke="#666" stroke-width="1"/><line x1="658" y1="607.5" x2="660" y2="607.5" stroke="#666" stroke-width="1"/><line x1="658" y1="602.5" x2="660" y2="602.5" stroke="#666" stroke-width="1"/><line x1="658" y1="597.5" x2="660" y2="597.5" stroke="#666" stroke-width="1"/><line x1="658" y1="591.5" x2="660" y2="591.5" stroke="#666" stroke-width="1"/><line x1="658" y1="586.5" x2="660" y2="586.5" stroke="#666" stroke-width="1"/><line x1="658" y1="581.5" x2="660" y2="581.5" stroke="#666" stroke-width="1"/><line x1="658" y1="575.5" x2="660" y2="575.5" stroke="#666" stroke-width="1"/><line x1="658" y1="570.5" x2="660" y2="570.5" stroke="#666" stroke-width="1"/><line x1="658" y1="565.5" x2="660" y2="565.5" stroke="#666" stroke-width="1"/><line x1="658" y1="560.5" x2="660" y2="560.5" stroke="#666" stroke-width="1"/><line x1="658" y1="554.5" x2="660" y2="554.5" stroke="#666" stroke-width="1"/><line x1="658" y1="549.5" x2="660" y2="549.5" stroke="#666" stroke-width="1"/><line x1="658" y1="544.5" x2="660" y2="544.5" stroke="#666" stroke-width="1"/><line x1="658" y1="539.5" x2="660" y2="539.5" stroke="#666" stroke-width="1"/><line x1="658" y1="533.5" x2="660" y2="533.5" stroke="#666" stroke-width="1"/><line x1="658" y1="528.5" x2="660" y2="528.5" stroke="#666" stroke-width="1"/><line x1="658" y1="523.5" x2="660" y2="523.5" stroke="#666" stroke-width="1"/><line x1="658" y1="518.5" x2="660" y2="518.5" stroke="#666" stroke-width="1"/><line x1="658" y1="512.5" x2="660" y2="512.5" stroke="#666" stroke-width="1"/><line x1="658" y1="507.5" x2="660" y2="507.5" stroke="#666" stroke-width="1"/><line x1="658" y1="502.5" x2="660" y2="502.5" stroke="#666" stroke-width="1"/><line x1="658" y1="497.5" x2="660" y2="497.5" stroke="#666" stroke-width="1"/><line x1="658" y1="491.5" x2="660" y2="491.5" stroke="#666" stroke-width="1"/><line x1="658" y1="486.5" x2="660" y2="486.5" stroke="#666" stroke-width="1"/><line x1="658" y1="481.5" x2="660" y2="481.5" stroke="#666" stroke-width="1"/><line x1="658" y1="476.5" x2="660" y2="476.5" stroke="#666" stroke-width="1"/><line x1="658" y1="470.5" x2="660" y2="470.5" stroke="#666" stroke-width="1"/><line x1="658" y1="465.5" x2="660" y2="465.5" stroke="#666" stroke-width="1"/><line x1="658" y1="460.5" x2="660" y2="460.5" stroke="#666" stroke-width="1"/><line x1="658" y1="455.5" x2="660" y2="455.5" stroke="#666" stroke-width="1"/><line x1="658" y1="449.5" x2="660" y2="449.5" stroke="#666" stroke-width="1"/><line x1="658" y1="444.5" x2="660" y2="444.5" stroke="#666" stroke-width="1"/><line x1="658" y1="439.5" x2="660" y2="439.5" stroke="#666" stroke-width="1"/><line x1="658" y1="433.5" x2="660" y2="433.5" stroke="#666" stroke-width="1"/><line x1="658" y1="428.5" x2="660" y2="428.5" stroke="#666" stroke-width="1"/><line x1="658" y1="423.5" x2="660" y2="423.5" stroke="#666" stroke-width="1"/><line x1="658" y1="418.5" x2="660" y2="418.5" stroke="#666" stroke-width="1"/><line x1="658" y1="412.5" x2="660" y2="412.5" stroke="#666" stroke-width="1"/><line x1="658" y1="407.5" x2="660" y2="407.5" stroke="#666" stroke-width="1"/><line x1="658" y1="402.5" x2="660" y2="402.5" stroke="#666" stroke-width="1"/><line x1="658" y1="397.5" x2="660" y2="397.5" stroke="#666" stroke-width="1"/><line x1="658" y1="391.5" x2="660" y2="391.5" stroke="#666" stroke-width="1"/><line x1="658" y1="386.5" x2="660" y2="386.5" stroke="#666" stroke-width="1"/><line x1="658" y1="381.5" x2="660" y2="381.5" stroke="#666" stroke-width="1"/><line x1="658" y1="376.5" x2="660" y2="376.5" stroke="#666" stroke-width="1"/><line x1="658" y1="370.5" x2="660" y2="370.5" stroke="#666" stroke-width="1"/><line x1="658" y1="365.5" x2="660" y2="365.5" stroke="#666" stroke-width="1"/><line x1="658" y1="360.5" x2="660" y2="360.5" stroke="#666" stroke-width="1"/><line x1="658" y1="355.5" x2="660" y2="355.5" stroke="#666" stroke-width="1"/><line x1="658" y1="349.5" x2="660" y2="349.5" stroke="#666" stroke-width="1"/><line x1="658" y1="344.5" x2="660" y2="344.5" stroke="#666" stroke-width="1"/><line x1="658" y1="339.5" x2="660" y2="339.5" stroke="#666" stroke-width="1"/><line x1="658" y1="334.5" x2="660" y2="334.5" stroke="#666" stroke-width="1"/><line x1="658" y1="328.5" x2="660" y2="328.5" stroke="#666" stroke-width="1"/><line x1="658" y1="323.5" x2="660" y2="323.5" stroke="#666" stroke-width="1"/><line x1="658" y1="318.5" x2="660" y2="318.5" stroke="#666" stroke-width="1"/><line x1="658" y1="312.5" x2="660" y2="312.5" stroke="#666" stroke-width="1"/><line x1="658" y1="307.5" x2="660" y2="307.5" stroke="#666" stroke-width="1"/><line x1="658" y1="302.5" x2="660" y2="302.5" stroke="#666" stroke-width="1"/><line x1="658" y1="297.5" x2="660" y2="297.5" stroke="#666" stroke-width="1"/><line x1="658" y1="291.5" x2="660" y2="291.5" stroke="#666" stroke-width="1"/><line x1="658" y1="286.5" x2="660" y2="286.5" stroke="#666" stroke-width="1"/><line x1="658" y1="281.5" x2="660" y2="281.5" stroke="#666" stroke-width="1"/><line x1="658" y1="276.5" x2="660" y2="276.5" stroke="#666" stroke-width="1"/><line x1="658" y1="270.5" x2="660" y2="270.5" stroke="#666" stroke-width="1"/><line x1="658" y1="265.5" x2="660" y2="265.5" stroke="#666" stroke-width="1"/><line x1="658" y1="260.5" x2="660" y2="260.5" stroke="#666" stroke-width="1"/><line x1="658" y1="255.5" x2="660" y2="255.5" stroke="#666" stroke-width="1"/><line x1="658" y1="249.5" x2="660" y2="249.5" stroke="#666" stroke-width="1"/><line x1="658" y1="244.5" x2="660" y2="244.5" stroke="#666" stroke-width="1"/><line x1="658" y1="239.5" x2="660" y2="239.5" stroke="#666" stroke-width="1"/><line x1="658" y1="234.5" x2="660" y2="234.5" stroke="#666" stroke-width="1"/><line x1="658" y1="228.5" x2="660" y2="228.5" stroke="#666" stroke-width="1"/><line x1="658" y1="223.5" x2="660" y2="223.5" stroke="#666" stroke-width="1"/><line x1="658" y1="218.5" x2="660" y2="218.5" stroke="#666" stroke-width="1"/><line x1="658" y1="213.5" x2="660" y2="213.5" stroke="#666" stroke-width="1"/><line x1="658" y1="207.5" x2="660" y2="207.5" stroke="#666" stroke-width="1"/><line x1="658" y1="202.5" x2="660" y2="202.5" stroke="#666" stroke-width="1"/><line x1="658" y1="197.5" x2="660" y2="197.5" stroke="#666" stroke-width="1"/><line x1="658" y1="192.5" x2="660" y2="192.5" stroke="#666" stroke-width="1"/><line x1="665" y1="723.5" x2="1147" y2="723.5" stroke="#777" stroke-width="1"/><line x1="675.5" y1="723" x2="675.5" y2="726" stroke="#777" stroke-width="1"/><line x1="755.5" y1="723" x2="755.5" y2="726" stroke="#777" stroke-width="1"/><line x1="835.5" y1="723" x2="835.5" y2="726" stroke="#777" stroke-width="1"/><line x1="915.5" y1="723" x2="915.5" y2="726" stroke="#777" stroke-width="1"/><line x1="995.5" y1="723" x2="995.5" y2="726" stroke="#777" stroke-width="1"/><line x1="1075.5" y1="723" x2="1075.5" y2="726" stroke="#777" stroke-width="1"/><line x1="666" y1="718.5" x2="1147" y2="718.5" stroke="#4a4a58" stroke-width="1"/><line x1="666" y1="718.5" x2="975" y2="718.5" stroke="#2a2ab0" stroke-width="1" stroke-dasharray="3,3"/><line x1="975" y1="718.5" x2="1147" y2="718.5" stroke="#141440" stroke-width="1.3"/><polyline points="975.2,715.3 986.1,714.3 999.8,716.4 1013.4,716.4 1026.3,707.3 1040.4,718.2 1053.5,707.8 1066.4,716.4 1080.1,718.4 1093.4,714.3 1106.6,716.4 1120.7,718.4 1133.4,709.2 1146.9,716.2" fill="none" stroke="#b8901a" stroke-width="1.4" stroke-linejoin="miter"/><polyline points="975.2,704.4 986.1,705.5 999.8,707.3 1013.4,709.2 1026.3,705.5 1040.4,710.4 1053.5,707.5 1066.4,708.3 1080.1,706.1 1093.4,708.4 1106.6,709.4 1120.7,708.3 1133.4,702.2 1146.9,708.0" fill="none" stroke="#10b010" stroke-width="1.4" stroke-linejoin="miter"/><polyline points="975.2,701.4 986.1,700.2 999.8,704.3 1013.4,708.4 1026.3,695.2 1040.4,709.6 1053.5,697.1 1066.4,706.2 1080.1,706.1 1093.4,704.1 1106.6,707.3 1120.7,708.0 1133.4,694.2 1146.9,706.0" fill="none" stroke="#f01818" stroke-width="1.4" stroke-linejoin="miter"/></svg>
<span class="t" style="left:648.17px;top:714.00px;font-size:11px;color:#333;">0</span>
<span class="t" style="left:648.17px;top:687.00px;font-size:11px;color:#333;">5</span>
<span class="t" style="left:641.45px;top:661.00px;font-size:11px;color:#333;letter-spacing:0.600px;">10</span>
<span class="t" style="left:641.45px;top:635.00px;font-size:11px;color:#333;letter-spacing:0.600px;">15</span>
<span class="t" style="left:641.45px;top:608.00px;font-size:11px;color:#333;letter-spacing:0.600px;">20</span>
<span class="t" style="left:641.45px;top:582.00px;font-size:11px;color:#333;letter-spacing:0.600px;">25</span>
<span class="t" style="left:641.45px;top:556.00px;font-size:11px;color:#333;letter-spacing:0.600px;">30</span>
<span class="t" style="left:641.45px;top:529.00px;font-size:11px;color:#333;letter-spacing:0.600px;">35</span>
<span class="t" style="left:641.45px;top:503.00px;font-size:11px;color:#333;letter-spacing:0.600px;">40</span>
<span class="t" style="left:641.45px;top:477.00px;font-size:11px;color:#333;letter-spacing:0.600px;">45</span>
<span class="t" style="left:641.45px;top:451.00px;font-size:11px;color:#333;letter-spacing:0.600px;">50</span>
<span class="t" style="left:641.45px;top:424.00px;font-size:11px;color:#333;letter-spacing:0.600px;">55</span>
<span class="t" style="left:641.45px;top:398.00px;font-size:11px;color:#333;letter-spacing:0.600px;">60</span>
<span class="t" style="left:641.45px;top:372.00px;font-size:11px;color:#333;letter-spacing:0.600px;">65</span>
<span class="t" style="left:641.45px;top:345.00px;font-size:11px;color:#333;letter-spacing:0.600px;">70</span>
<span class="t" style="left:641.45px;top:319.00px;font-size:11px;color:#333;letter-spacing:0.600px;">75</span>
<span class="t" style="left:641.45px;top:293.00px;font-size:11px;color:#333;letter-spacing:0.600px;">80</span>
<span class="t" style="left:641.45px;top:266.00px;font-size:11px;color:#333;letter-spacing:0.600px;">85</span>
<span class="t" style="left:641.45px;top:240.00px;font-size:11px;color:#333;letter-spacing:0.600px;">90</span>
<span class="t" style="left:641.45px;top:214.00px;font-size:11px;color:#333;letter-spacing:0.600px;">95</span>
<span class="t" style="left:634.74px;top:187.00px;font-size:11px;color:#333;letter-spacing:0.800px;">100</span>
<span class="t" style="left:655.80px;top:729.19px;font-size:11px;color:#222;letter-spacing:0.100px;">8:34:00</span>
<span class="t" style="left:735.80px;top:729.19px;font-size:11px;color:#222;letter-spacing:0.100px;">8:34:30</span>
<span class="t" style="left:815.80px;top:729.19px;font-size:11px;color:#222;letter-spacing:0.100px;">8:35:00</span>
<span class="t" style="left:895.80px;top:729.19px;font-size:11px;color:#222;letter-spacing:0.100px;">8:35:30</span>
<span class="t" style="left:975.80px;top:729.19px;font-size:11px;color:#222;letter-spacing:0.100px;">8:36:00</span>
<span class="t" style="left:1055.80px;top:729.19px;font-size:11px;color:#222;letter-spacing:0.100px;">8:36:30</span>
<div class="a" style="left:627px;top:746px;width:533px;height:63px;background:#fff;border:1px solid #000"></div>
<div class="a" style="left:631px;top:756px;width:15px;height:1px;background:#10b010"></div>
<span class="t" style="left:649.00px;top:751.54px;font-size:12px;color:#333;letter-spacing:0.123px;">Number of DL bursts transferred in MIMO A</span>
<div class="a" style="left:892px;top:756px;width:15px;height:1px;background:#c09020"></div>
<span class="t" style="left:910.00px;top:751.54px;font-size:12px;color:#333;letter-spacing:0.101px;">Number of DL bursts transferred in MIMO B</span>
<div class="a" style="left:631px;top:777px;width:15px;height:1px;background:#333"></div>
<span class="t" style="left:649.00px;top:771.64px;font-size:12px;color:#333;letter-spacing:0.061px;">Number of DL bursts transferred in CDD, DDoB</span>
<div class="a" style="left:910px;top:777px;width:15px;height:1px;background:#1010e0"></div>
<span class="t" style="left:928.00px;top:771.64px;font-size:12px;color:#333;letter-spacing:0.104px;">Number of DL bursts transferred in BF</span>
<div class="a" style="left:631px;top:797px;width:15px;height:1px;background:#f01818"></div>
<span class="t" style="left:649.00px;top:792.54px;font-size:12px;color:#333;letter-spacing:0.257px;">Number of Total DL bursts transferred</span>
<div class="btn" style="left:1177px;top:181px;width:36px;height:20px"></div>
<div class="btn" style="left:1213px;top:181px;width:36px;height:20px"></div>
<svg style="left:1191px;top:187px" width="8" height="9" viewBox="0 0 8 9"><path d="M7 1 L1.5 4.5 L7 8" stroke="#111" stroke-width="1.1" fill="none"/></svg>
<svg style="left:1227px;top:187px" width="8" height="9" viewBox="0 0 8 9"><path d="M1 1 L6.5 4.5 L1 8" stroke="#111" stroke-width="1.1" fill="none"/></svg>
<svg style="left:1177px;top:207px" width="91" height="23" viewBox="0 0 91 23"><rect x="0.5" y="0.5" width="90" height="22" rx="2" fill="none" stroke="#2f5f85" stroke-width="1" stroke-dasharray="1.5,1.5"/></svg>
<svg style="left:1182px;top:211px" width="15" height="16" viewBox="0 0 15 16"><defs><linearGradient id="bg" x1="0" y1="0" x2="0" y2="1"><stop offset="0" stop-color="#8ebbe0"/><stop offset="0.55" stop-color="#79a8d0"/><stop offset="1" stop-color="#86b4da"/></linearGradient></defs><rect x="0.55" y="2.55" width="12" height="12" rx="2.6" fill="url(#bg)" stroke="#2b5679" stroke-width="1.1"/><path d="M2.4 7 L5.9 11.6 L11.2 0.9" stroke="#284a68" stroke-width="2" fill="none" stroke-linejoin="round"/></svg>
<span class="t" style="left:1199.60px;top:213.89px;font-size:11px;letter-spacing:-0.223px;">Positive Only</span>
<svg style="left:1182px;top:240px" width="15" height="16" viewBox="0 0 15 16"><defs><linearGradient id="bg" x1="0" y1="0" x2="0" y2="1"><stop offset="0" stop-color="#8ebbe0"/><stop offset="0.55" stop-color="#79a8d0"/><stop offset="1" stop-color="#86b4da"/></linearGradient></defs><rect x="0.55" y="2.55" width="12" height="12" rx="2.6" fill="url(#bg)" stroke="#2b5679" stroke-width="1.1"/><path d="M2.4 7 L5.9 11.6 L11.2 0.9" stroke="#284a68" stroke-width="2" fill="none" stroke-linejoin="round"/></svg>
<span class="t" style="left:1199.60px;top:242.89px;font-size:11px;letter-spacing:-0.335px;">Show Legend</span>
<div class="btn" style="left:1177px;top:790px;width:92px;height:20px"></div>
<span class="t" style="left:1205.70px;top:794.69px;font-size:11px;letter-spacing:0.113px;">Print...</span>
<span class="t" style="left:311.00px;top:822.89px;font-size:11px;letter-spacing:-0.038px;">* Counters are shown with actual values</span>
<span class="t" style="left:311.00px;top:836.59px;font-size:11px;letter-spacing:-0.075px;">All other counters are calculated as delta between current and previous values divided by collection time</span>
<span class="t" style="left:315.60px;top:858.99px;font-size:11px;letter-spacing:0.021px;">Polling Interval (sec):</span>
<div class="a" style="left:425px;top:854px;width:45px;height:20px;border:1px solid #5a5d62;border-radius:2px;background:linear-gradient(#f4f5f6,#e2e4e7)"></div>
<div class="a" style="left:451px;top:855px;width:18px;height:18px;border-left:1px solid #5a5d62;background:linear-gradient(#eceef0 0%,#dcdfe2 45%,#c6c9cd 52%,#d3d6d9 100%)"></div>
<svg style="left:455px;top:860px" width="10" height="7" viewBox="0 0 10 7"><path d="M1 1 L5 5.5 L9 1" stroke="#222" stroke-width="1.6" fill="none"/></svg>
<span class="t" style="left:430.00px;top:858.99px;font-size:11px;">5</span>
<div class="btn" style="left:475px;top:854px;width:70px;height:20px"></div>
<span class="t" style="left:497.00px;top:858.99px;font-size:11px;letter-spacing:-0.306px;">Apply</span>
<div class="btn" style="left:906px;top:854px;width:70px;height:20px"></div>
<span class="t" style="left:930.40px;top:858.69px;font-size:11px;letter-spacing:-0.360px;">Stop</span>
<div class="a" style="left:311px;top:892px;width:965px;height:1px;background:linear-gradient(90deg,#e8ecf3 0,#767a7e 12px,#6a6e72 935px,#e8ecf3 100%)"></div>
<div class="btn" style="left:316px;top:897px;width:22px;height:22px;border-radius:2px"></div>
<svg style="left:319px;top:900px" width="16" height="16" viewBox="0 0 16 16"><circle cx="8" cy="8" r="6.8" fill="#fff" stroke="#2a62b8" stroke-width="1.4"/><path d="M5.6 6.3 Q5.6 3.8 8 3.8 Q10.4 3.8 10.4 6 Q10.4 7.4 8.8 8.1 Q8 8.5 8 9.8" stroke="#2a62b8" stroke-width="1.6" fill="none"/><circle cx="8" cy="11.8" r="1" fill="#2a62b8"/></svg>
<div class="btn" style="left:1200px;top:897px;width:70px;height:22px"></div>
<svg style="left:1207px;top:901px" width="15" height="16" viewBox="0 0 15 16"><path d="M5 6 Q6 2 10.5 2.5 L10.5 0.8 L14 4 L10.5 7 L10.5 5.2 Q7.5 5 5 6 Z" fill="#f6c84a" stroke="#b88a10" stroke-width="0.8"/><path d="M10 10 Q9 14 4.5 13.5 L4.5 15.2 L1 12 L4.5 9 L4.5 10.8 Q7.5 11 10 10 Z" fill="#f6c84a" stroke="#b88a10" stroke-width="0.8"/></svg>
<span class="t" style="left:1225.60px;top:902.69px;font-size:11px;letter-spacing:-0.162px;">Refresh</span>
<div class="a" style="left:1226px;top:914px;width:7px;height:1px;background:#000"></div>
<span class="t" style="left:5.00px;top:932.69px;font-size:11px;letter-spacing:-0.472px;">Done.</span>
<div class="a" style="left:1113px;top:930px;width:163px;height:16px;border:1px solid #5a5d62;border-right:none;background:linear-gradient(#eef0f2 0%,#dfe2e5 45%,#c6c9cd 55%,#d2d5d8 100%)"></div>
<div class="a" style="left:4px;top:948px;width:1272px;height:27px;background:#d4d0c8;border-top:1px solid #d8d4cc;box-shadow:inset 0 1px 0 #fff;border-bottom:1px solid #fbfbfa"></div>
<div class="wbtn" style="left:6px;top:952px;width:51px;height:21px"></div>
<svg style="left:8px;top:955px" width="16" height="14" viewBox="0 0 16 14"><path d="M1 2 Q4 0.5 7 2 L6 6.5 Q3 5 0 6.5 Z" fill="#f05a22"/><path d="M8 2 Q11 3.5 15 1.5 L14 6 Q11 8 7 6.5 Z" fill="#7cc028"/><path d="M0 7.5 Q3 6 6 7.5 L5 12 Q2 10.5 -1 12 Z" fill="#2a9ae0"/><path d="M7 7.5 Q10 9 14 7 L13 11.5 Q10 13.5 6 12 Z" fill="#fbbc09"/></svg>
<span class="t" style="left:24.30px;top:957.34px;font-size:12px;font-weight:700;letter-spacing:0.203px;">Пуск</span>
<div class="a" style="left:64px;top:954px;width:3px;height:18px;border-left:1px solid #fff;border-right:1px solid #808080"></div>
<div class="wbtn" style="left:75px;top:952px;width:105px;height:21px"></div>
<svg style="left:79px;top:955px" width="16" height="16" viewBox="0 0 16 16"><circle cx="8" cy="8.2" r="7.6" fill="#e2601a"/><circle cx="9.2" cy="6.8" r="4.6" fill="#3d7fd6"/><circle cx="10" cy="5.8" r="2.2" fill="#7fb8f0"/><path d="M1 9 Q2.5 14.5 8.5 15 Q13.5 14.5 15 10 Q12 13 8.5 12.2 Q5 11.5 4.6 8 Q4.5 5 7.5 3 Q4 2.5 2.5 5 Q3 2 5.5 1 Q1 2.5 1 9 Z" fill="#f49a1e"/></svg>
<div class="wbtn" style="left:182px;top:952px;width:105px;height:21px"></div>
<svg style="left:186px;top:955px" width="16" height="16" viewBox="0 0 16 16"><path d="M0.5 1 L4 0.5 L4 14 L0.5 15 Z" fill="#f0d070"/><rect x="0.5" y="1" width="10" height="14" rx="1" fill="#f7e08a" stroke="#d8b850" stroke-width="0.8"/><path d="M5 1.5 V14.5" stroke="#e0c060" stroke-width="1"/><path d="M8 6.5 H12 V10 H14.5 L10 15 L5.5 10 H8 Z" fill="#2a92e8" stroke="#1a70c0" stroke-width="0.6"/></svg>
<div class="wbtn" style="left:289px;top:952px;width:104px;height:21px"></div>
<svg style="left:293px;top:955px" width="16" height="16" viewBox="0 0 16 16"><rect x="4" y="2" width="11" height="9" fill="#222" stroke="#888" stroke-width="1"/><path d="M5 8 L7 5 L9 8 L11 4 L14 6" stroke="#2ecc40" stroke-width="1.2" fill="none"/><rect x="0" y="7" width="2" height="8" fill="#6c6"/><rect x="7" y="12" width="6" height="2" fill="#999"/></svg>
<div class="wbtn" style="left:396px;top:952px;width:104px;height:21px"></div>
<svg style="left:400px;top:955px" width="16" height="16" viewBox="0 0 16 16"><rect x="0" y="2" width="16" height="12" fill="#000" stroke="#9a9a9a" stroke-width="1"/><rect x="0" y="2" width="16" height="2" fill="#cfcfcf"/><text x="1.5" y="12" font-size="6.5" font-family="Liberation Mono" font-weight="700" fill="#fff">C:\</text></svg>
<div class="wbtn" style="left:502px;top:952px;width:103px;height:21px"></div>
<svg style="left:506px;top:955px" width="16" height="16" viewBox="0 0 16 16"><rect x="0" y="2" width="16" height="12" fill="#000" stroke="#9a9a9a" stroke-width="1"/><rect x="0" y="2" width="16" height="2" fill="#cfcfcf"/><text x="1.5" y="12" font-size="6.5" font-family="Liberation Mono" font-weight="700" fill="#fff">C:\</text></svg>
<div class="wbtn" style="left:607px;top:952px;width:103px;height:21px"></div>
<svg style="left:611px;top:955px" width="16" height="16" viewBox="0 0 16 16"><rect x="0" y="0" width="16" height="16" fill="#fff"/><path d="M2 15 L6.5 3 L11 15 M4 10.5 H9.5" stroke="#1f4aa8" stroke-width="2.4" fill="none"/><path d="M11 1 L15 5 M15 1 L11 5" stroke="#3cb85a" stroke-width="1.4"/></svg>
<div class="a" style="left:710px;top:952px;width:104px;height:21px;background:#f7f6f3;border-top:1px solid #404040;border-left:1px solid #404040;border-right:1px solid #fff;border-bottom:1px solid #fff;box-shadow:inset 1px 1px 0 #8c8a86"></div>
<svg style="left:714px;top:955px" width="16" height="16" viewBox="0 0 16 16"><rect x="0.5" y="0.5" width="15" height="15" rx="2.5" fill="#f4f4f4" stroke="#666" stroke-width="1"/><path d="M8 5.5 L5.2 13.5 M8 5.5 L10.8 13.5 M6.3 10.5 H9.7" stroke="#111" stroke-width="1.4" fill="none"/><circle cx="8" cy="4.2" r="1.3" fill="#111"/><path d="M4.6 1.8 Q3.4 4 4.6 6.4 M11.4 1.8 Q12.6 4 11.4 6.4 M2.6 1 Q0.9 4 2.6 7.2 M13.4 1 Q15.1 4 13.4 7.2" stroke="#111" stroke-width="1" fill="none"/></svg>
<div class="wbtn" style="left:817px;top:952px;width:103px;height:21px"></div>
<svg style="left:821px;top:955px" width="16" height="16" viewBox="0 0 16 16"><rect x="0" y="1" width="9" height="11" fill="#f2d67a"/><rect x="4" y="3" width="10" height="8" fill="#3a6ad0" stroke="#ddd" stroke-width="1"/><rect x="6" y="12" width="3" height="2" fill="#3cb85a"/><rect x="1" y="14" width="13" height="1.5" fill="#3cb85a"/></svg>
<div class="wbtn" style="left:923px;top:952px;width:104px;height:21px"></div>
<svg style="left:927px;top:955px" width="16" height="16" viewBox="0 0 16 16"><text x="0.3" y="15.5" font-size="22" font-family="Liberation Sans" font-weight="700" fill="#2f86e0">e</text><path d="M1.5 15 Q-0.5 11 5 6 Q11 1 15 1.5 Q14 4 11.5 5" stroke="#f0b020" stroke-width="1.4" fill="none"/></svg>
<span class="t" style="left:98.40px;top:958.19px;font-size:11px;letter-spacing:-0.062px;">Проблема пр...</span>
<span class="t" style="left:205.50px;top:958.19px;font-size:11px;letter-spacing:0.152px;">Загрузки</span>
<span class="t" style="left:313.00px;top:958.19px;font-size:11px;letter-spacing:0.173px;">Диспетчер з...</span>
<span class="t" style="left:419.60px;top:958.19px;font-size:11px;letter-spacing:-0.217px;">cmd - Ярлык</span>
<span class="t" style="left:525.00px;top:958.19px;font-size:11px;letter-spacing:0.106px;">Администра...</span>
<span class="t" style="left:630.50px;top:958.19px;font-size:11px;letter-spacing:-0.353px;">AlvariSTAR</span>
<span class="t" style="left:734.60px;top:958.19px;font-size:11px;font-weight:700;letter-spacing:0.146px;">NAU_1 on 1...</span>
<span class="t" style="left:840.60px;top:958.19px;font-size:11px;letter-spacing:0.176px;">Сетевые по...</span>
<span class="t" style="left:946.70px;top:958.19px;font-size:11px;letter-spacing:-0.239px;">WM_DD Help...</span>
<div class="a" style="left:1037px;top:954px;width:3px;height:18px;border-left:1px solid #808080;border-right:1px solid #fff"></div><div class="a" style="left:1068px;top:952px;width:2px;height:21px;border-left:1px solid #808080;border-right:1px solid #fff"></div>
<span class="t" style="left:1048.40px;top:958.19px;font-size:11px;letter-spacing:-0.591px;">EN</span>
<div class="a" style="left:1072px;top:952px;width:204px;height:21px;border-top:1px solid #808080;border-left:1px solid #808080;border-bottom:1px solid #fff"></div>
<svg style="left:1080px;top:955px" width="196" height="16" viewBox="0 0 196 16"><rect x="1" y="1" width="11" height="12" fill="#000" /><path d="M12 1 V13 H1" stroke="#fff" stroke-width="1" fill="none"/><g fill="#00b000"><rect x="2" y="2" width="1" height="1"/><rect x="2" y="4" width="1" height="1"/><rect x="2" y="6" width="1" height="1"/><rect x="2" y="8" width="1" height="1"/><rect x="2" y="10" width="1" height="1"/><rect x="2" y="12" width="1" height="1"/><rect x="4" y="2" width="1" height="1"/><rect x="4" y="4" width="1" height="1"/><rect x="4" y="6" width="1" height="1"/><rect x="4" y="8" width="1" height="1"/><rect x="4" y="10" width="1" height="1"/><rect x="4" y="12" width="1" height="1"/><rect x="6" y="2" width="1" height="1"/><rect x="6" y="4" width="1" height="1"/><rect x="6" y="6" width="1" height="1"/><rect x="6" y="8" width="1" height="1"/><rect x="6" y="10" width="1" height="1"/><rect x="6" y="12" width="1" height="1"/><rect x="8" y="2" width="1" height="1"/><rect x="8" y="4" width="1" height="1"/><rect x="8" y="6" width="1" height="1"/><rect x="8" y="8" width="1" height="1"/><rect x="8" y="10" width="1" height="1"/><rect x="8" y="12" width="1" height="1"/><rect x="10" y="2" width="1" height="1"/><rect x="10" y="4" width="1" height="1"/><rect x="10" y="6" width="1" height="1"/><rect x="10" y="8" width="1" height="1"/><rect x="10" y="10" width="1" height="1"/><rect x="10" y="12" width="1" height="1"/></g><path d="M24 1 V15" stroke="#888" stroke-width="1"/><path d="M24 2 H33 L31 5 L33 8 H24" fill="#fff" stroke="#777" stroke-width="0.8"/><circle cx="32" cy="11" r="4" fill="#e02020"/><path d="M30.3 9.3 L33.7 12.7 M33.7 9.3 L30.3 12.7" stroke="#fff" stroke-width="1.2"/><path d="M47 4 L53 1 L59 4 V11 L53 14 L47 11 Z" fill="#264f8a" stroke="#dde6f0" stroke-width="0.9"/><path d="M47 4 L53 7 L59 4 M53 7 V14" stroke="#dde6f0" stroke-width="0.9" fill="none"/><path d="M57 9 L58 11 L60 11.3 L58.5 12.6 L59 15 L57 13.7 L55 15 L55.5 12.6 L54 11.3 L56 11 Z" fill="#f0c020"/><rect x="70" y="1" width="8" height="14" fill="#d0d0d0" stroke="#555" stroke-width="0.8"/><path d="M71 3.5 H77 M71 5.5 H77" stroke="#888" stroke-width="0.8"/><rect x="71" y="12" width="2" height="1" fill="#c33"/><circle cx="79" cy="11" r="4.5" fill="#22bb22"/><path d="M77.5 8.5 L81.5 11 L77.5 13.5 Z" fill="#000"/><path d="M94 1 V9 M97 1 V9 M93 5 H98" stroke="#777" stroke-width="1"/><rect x="96" y="4" width="10" height="8" fill="#ccc" stroke="#777" stroke-width="0.8"/><path d="M99 13 H104" stroke="#777" stroke-width="1"/><path d="M120 6 H123 L127 2.5 V13.5 L123 10 H120 Z" fill="#e8e8e8" stroke="#888" stroke-width="0.8"/><path d="M129 5 Q131 8 129 11 M131.5 3.5 Q134 8 131.5 12.5" stroke="#999" stroke-width="1" fill="none"/><rect x="184" y="2" width="12" height="12" fill="#2a6ad0" stroke="#9ab" stroke-width="0.6"/><rect x="184" y="10" width="12" height="3" fill="#3a3a3a"/></svg>
<span class="t" style="left:1231.00px;top:958.19px;font-size:11px;letter-spacing:0.145px;">8:36</span>
<div class="a" style="left:2px;top:975px;width:1276px;height:22px;background:linear-gradient(#efeeec,#e8e6e3)"></div>
<svg style="left:1020px;top:975px" width="260" height="20" viewBox="0 0 260 20"><ellipse cx="10" cy="14" rx="7.5" ry="3" fill="#2a6ab8"/><ellipse cx="10" cy="10" rx="7.5" ry="3" fill="#3a8ad8"/><ellipse cx="10" cy="6" rx="7.5" ry="3" fill="#5aaaf0" stroke="#1a4a88" stroke-width="0.6"/><ellipse cx="10" cy="6" rx="2" ry="0.8" fill="#fff"/><circle cx="31" cy="9" r="7.5" fill="#e8e8e8" stroke="#bbb" stroke-width="0.8"/><circle cx="31" cy="9" r="2" fill="#fff" stroke="#bbb" stroke-width="0.6"/><rect x="49" y="2" width="9" height="7" fill="#3a8ad8" stroke="#123" stroke-width="0.8"/><rect x="44" y="7" width="9" height="7" fill="#3a8ad8" stroke="#123" stroke-width="0.8"/><path d="M65 5 H70 L71 4 H79 V15 H65 Z" fill="#e0e0e0" stroke="#aaa" stroke-width="0.8"/><rect x="86" y="2" width="14" height="14" rx="1" fill="#8a8adc" stroke="#444" stroke-width="1"/><text x="89" y="13.5" font-size="11" font-family="Liberation Sans" font-weight="700" fill="#fff">V</text><path d="M108 1 V18" stroke="#c8c6c2" stroke-width="1"/><circle cx="122" cy="9" r="7.5" fill="#4a6ab8"/><path d="M118 5 Q124 3 127 8 L129 6 L129 13 L122 13 L125 11 Q122 7 118 9 Z" fill="#58d040"/><rect x="136" y="1" width="15" height="15" fill="#e8e4d0" stroke="#555" stroke-width="1"/><path d="M140 4 H147 V8 H150 L143.5 14 L137 8 H140 Z" fill="#30c030" stroke="#185" stroke-width="0.6"/><g fill="#aaa"><rect x="252" y="14" width="1" height="1"/><rect x="249" y="14" width="1" height="1"/><rect x="246" y="14" width="1" height="1"/><rect x="243" y="14" width="1" height="1"/><rect x="252" y="11" width="1" height="1"/><rect x="249" y="11" width="1" height="1"/><rect x="246" y="11" width="1" height="1"/><rect x="252" y="8" width="1" height="1"/><rect x="249" y="8" width="1" height="1"/><rect x="252" y="5" width="1" height="1"/></g></svg>
<span class="t" style="left:1175.00px;top:977.60px;font-size:13px;letter-spacing:0.495px;">Правый Ctrl</span>
<div class="a" style="left:0;top:999px;width:1280px;height:25px;background:#edebe9"></div>
<div class="gbtn" style="left:1px;top:1001px;width:22px;height:22px"></div>
<svg style="left:4px;top:1004px" width="16" height="16" viewBox="0 0 16 16"><path d="M0.8 1.5 H5.5 L6.5 3 H15.2 V14.8 H0.8 Z" fill="#8a8a72" stroke="#55554a" stroke-width="0.9"/><path d="M0.8 4.5 H15.2 V14.8 H0.8 Z" fill="#cfcfbf" stroke="#55554a" stroke-width="0.9"/><rect x="6.5" y="7" width="3" height="4" fill="none" stroke="#55554a" stroke-width="0.8"/></svg>
<div class="a" style="left:27px;top:1003px;width:5px;height:18px;background:radial-gradient(circle,#b0ada8 0.6px,transparent 0.9px) 0 0/2.5px 3px"></div>
<div class="gbtn" style="left:35px;top:1001px;width:220px;height:22px"></div>
<svg style="left:42px;top:1004px" width="14" height="16" viewBox="0 0 14 16"><path d="M7 1 L13 4 V12 L7 15 L1 12 V4 Z" fill="#1a3f78"/><path d="M1 4 L7 7 L13 4 M7 7 V15" stroke="#f4f6fa" stroke-width="1" fill="none"/></svg>
<span class="t" style="left:67.00px;top:1004.50px;font-size:13px;letter-spacing:0.450px;">Oracle VM VirtualBox Мен...</span>
<div class="a" style="left:257px;top:1001px;width:221px;height:22px;border:1px solid #a9a6a1;border-radius:3px;background:linear-gradient(#d3d0cb,#dedbd7)"></div>
<svg style="left:265px;top:1005px" width="16" height="16" viewBox="0 0 16 16"><rect x="0" y="0" width="16" height="16" fill="#e8e4dc"/><rect x="0" y="9" width="9" height="7" fill="#3a8ee8"/><rect x="1" y="11" width="5" height="4" fill="#9cd0fa"/><path d="M9 1 H16 V12 H9 Z" fill="#58c838"/><path d="M11 2 H15 V8 Q12 6 11 2 Z" fill="#b8f070"/><rect x="8" y="12" width="8" height="4" fill="#f4b83a"/><path d="M6.5 0 H9.5 L8.8 9 H0 V6.5 H6 Z" fill="#ee7a2a"/><path d="M7.2 1 L7 7 H1" stroke="#fff3e0" stroke-width="0.8" fill="none"/><rect x="0.5" y="0.5" width="5.5" height="5" fill="#fff"/><rect x="1" y="1.3" width="4.5" height="1.6" fill="#222"/><rect x="1.5" y="3.5" width="2.5" height="1.3" fill="#444"/><path d="M1 10 L2.2 13.5 L3.4 10 M4.6 10.5 V13.5 M6.3 10.5 Q5.2 11.2 6.3 12 Q7.2 12.7 6 13.5 M8.2 10 V13.5 M7.4 11 H9 M11.8 11 Q9.8 11 10.2 12.5 Q10.6 13.8 12 13" stroke="#a8182a" stroke-width="1.1" fill="none"/><rect x="0.3" y="0.3" width="15.4" height="15.4" fill="none" stroke="#8a8070" stroke-width="0.6"/></svg>
<span class="t" style="left:288.50px;top:1005.50px;font-size:13px;letter-spacing:0.763px;">winda [Работает] - Oracle...</span>
<div class="a" style="left:1175px;top:1002px;width:25px;height:20px;border:1.5px solid #000;border-radius:2px;background:#ebe9e6"></div>
<div class="a" style="left:1181px;top:1005px;width:12px;height:14px;background:linear-gradient(#fff,#fff);border:1px solid #bbb"></div><div class="a" style="left:1183px;top:1008px;width:4px;height:2px;background:#58a"></div><div class="a" style="left:1182px;top:1016px;width:3px;height:2px;background:#4a4"></div>
<div class="a" style="left:1200px;top:1002px;width:27px;height:20px;background:#c8d8ee;border-bottom:2px solid #6a8ac8"></div>
<svg style="left:1205px;top:1004px" width="16" height="16" viewBox="0 0 16 16"><rect x="0" y="0" width="16" height="16" fill="#e8e4dc"/><rect x="0" y="9" width="9" height="7" fill="#3a8ee8"/><rect x="1" y="11" width="5" height="4" fill="#9cd0fa"/><path d="M9 1 H16 V12 H9 Z" fill="#58c838"/><path d="M11 2 H15 V8 Q12 6 11 2 Z" fill="#b8f070"/><rect x="8" y="12" width="8" height="4" fill="#f4b83a"/><path d="M6.5 0 H9.5 L8.8 9 H0 V6.5 H6 Z" fill="#ee7a2a"/><path d="M7.2 1 L7 7 H1" stroke="#fff3e0" stroke-width="0.8" fill="none"/><rect x="0.5" y="0.5" width="5.5" height="5" fill="#fff"/><rect x="1" y="1.3" width="4.5" height="1.6" fill="#222"/><rect x="1.5" y="3.5" width="2.5" height="1.3" fill="#444"/><path d="M1 10 L2.2 13.5 L3.4 10 M4.6 10.5 V13.5 M6.3 10.5 Q5.2 11.2 6.3 12 Q7.2 12.7 6 13.5 M8.2 10 V13.5 M7.4 11 H9 M11.8 11 Q9.8 11 10.2 12.5 Q10.6 13.8 12 13" stroke="#a8182a" stroke-width="1.1" fill="none"/><rect x="0.3" y="0.3" width="15.4" height="15.4" fill="none" stroke="#8a8070" stroke-width="0.6"/></svg>
<div class="a" style="left:1227px;top:1002px;width:26px;height:20px;background:#a8a6a2"></div>
<div class="a" style="left:1253px;top:1002px;width:26px;height:20px;border:1.5px solid #000;border-radius:2px;background:#f4f3f1"></div>
<div class="a" style="left:1258px;top:1005px;width:16px;height:13px;background:#2f3a38;border:1px solid #888"></div>
<svg style="left:1260px;top:1007px" width="10" height="8" viewBox="0 0 10 8"><path d="M1 1 L3 3 L1 5 M4 6 H8" stroke="#ddd" stroke-width="0.8" fill="none"/></svg>
</body></html>
